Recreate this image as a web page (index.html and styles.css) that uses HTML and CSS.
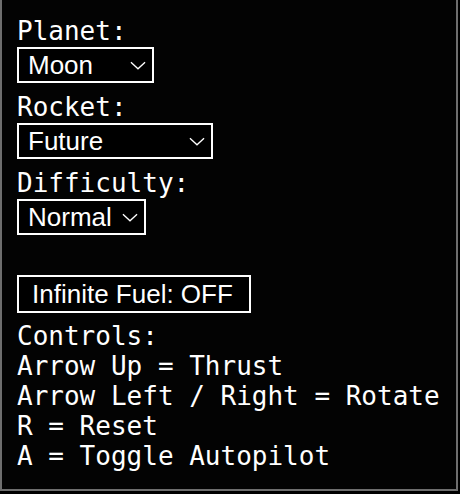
FILE: index.html
```html
<!DOCTYPE html>
<html>
<head>
<meta charset="utf-8">
<link rel="stylesheet" href="styles.css">
</head>
<body>
<div class="panel">
  <div class="label">Planet:</div>
  <select class="sel sel-planet"><option>Moon</option><option>Mars</option></select>
  <div class="label">Rocket:</div>
  <select class="sel sel-rocket"><option>Future</option><option>Classic</option></select>
  <div class="label">Difficulty:</div>
  <select class="sel sel-diff"><option>Normal</option><option>Easy</option></select>
  <div class="spacer"></div>
  <button class="toggle">Infinite Fuel: OFF</button>
  <div class="controls">
    <div class="line">Controls:</div>
    <div class="line">Arrow Up = Thrust</div>
    <div class="line">Arrow Left / Right = Rotate</div>
    <div class="line">R = Reset</div>
    <div class="line">A = Toggle Autopilot</div>
  </div>
</div>
</body>
</html>
```
FILE: styles.css
```css
html, body {
  margin: 0;
  padding: 0;
  background: #000;
}
.panel {
  box-sizing: border-box;
  width: 458px;
  height: 491px;
  border: 2px solid #6e6e6e;
  border-top: none;
  background: #030303;
  padding: 16px 0 0 15px;
  display: flex;
  flex-direction: column;
  align-items: flex-start;
  color: #fff;
  font-family: "DejaVu Sans Mono", monospace;
  font-size: 26px;
  overflow: hidden;
}
.panel > * {
  flex-shrink: 0;
}
.label {
  line-height: 30px;
  height: 30px;
  white-space: pre;
}
.sel {
  -webkit-appearance: none;
  appearance: none;
  box-sizing: border-box;
  height: 36px;
  margin: 1px 0 9px 0;
  border: 2px solid #fff;
  border-radius: 0;
  background-color: #000;
  color: #fff;
  font-family: "Liberation Sans", Arial, sans-serif;
  font-size: 26px;
  padding: 0 0 0 9px;
  background-image: url("data:image/svg+xml;utf8,<svg xmlns='http://www.w3.org/2000/svg' width='17' height='9' viewBox='0 0 17 9'><path d='M1 1 L8.5 8 L16 1' fill='none' stroke='white' stroke-width='1.4'/></svg>");
  background-repeat: no-repeat;
  background-position: right 6px center;
  background-size: 16px 9px;
  outline: none;
}
.sel-planet { width: 137px; }
.sel-rocket { width: 196px; }
.sel-diff { width: 129px; margin-bottom: 0; }
.spacer { height: 40px; }
.toggle {
  box-sizing: border-box;
  height: 38px;
  width: 234px;
  border: 2px solid #fff;
  border-radius: 0;
  background: #000;
  color: #fff;
  font-family: "Liberation Sans", Arial, sans-serif;
  font-size: 26px;
  padding: 0 0 0 13px;
  text-align: left;
  white-space: nowrap;
  margin: 0 0 8px 0;
}
.controls {
  display: flex;
  flex-direction: column;
}
.line {
  line-height: 30px;
  height: 30px;
  white-space: pre;
}
```
